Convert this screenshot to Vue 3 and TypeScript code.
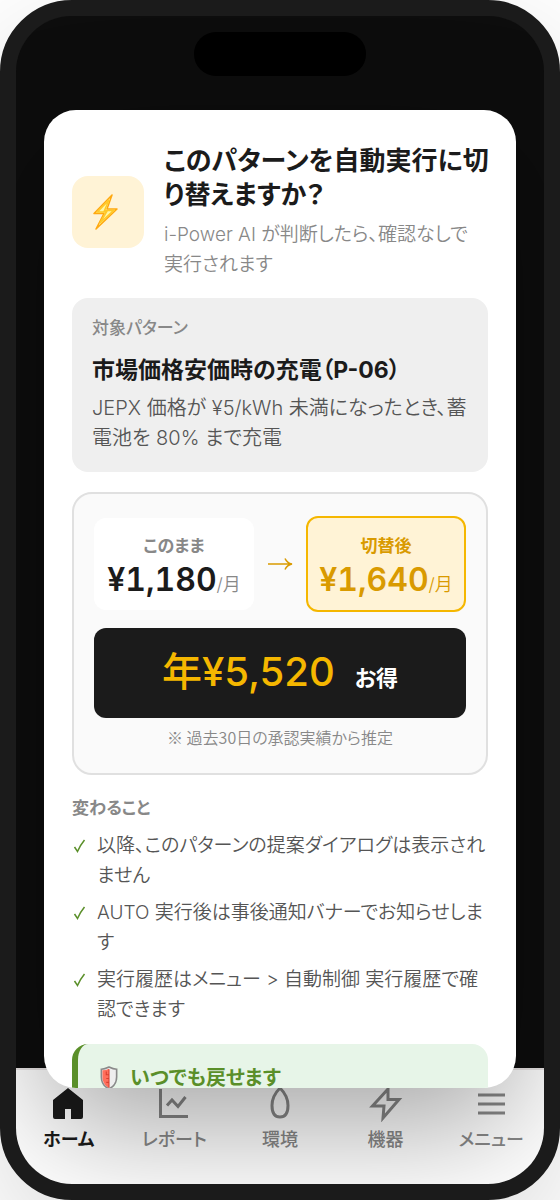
<script setup lang="ts">
interface Tab {
  id: string
  label: string
}

const tabs: Tab[] = [
  { id: 'home', label: 'ホーム' },
  { id: 'report', label: 'レポート' },
  { id: 'env', label: '環境' },
  { id: 'device', label: '機器' },
  { id: 'menu', label: 'メニュー' },
]

const changes: string[] = [
  '以降、このパターンの提案ダイアログは表示されません',
  'AUTO 実行後は事後通知バナーでお知らせします',
  '実行履歴はメニュー > 自動制御 実行履歴で確認できます',
]
</script>

<template>
  <div class="phone">
    <div class="screen">
      <div class="island"></div>

      <nav class="tabbar">
        <button v-for="tab in tabs" :key="tab.id" type="button" class="tab" :class="{ active: tab.id === 'home' }">
          <svg v-if="tab.id === 'home'" viewBox="0 0 36 36" class="tab-icon">
            <path d="M17 2 2 14v17a2 2 0 0 0 2 2h10V23h6v10h10a2 2 0 0 0 2-2V14Z" fill="currentColor" />
          </svg>
          <svg v-else-if="tab.id === 'report'" viewBox="0 0 36 36" class="tab-icon line">
            <path d="M4.500 3v27.500H32M11 19.500l5-5.500 6 6.500 7.500-9.500" />
          </svg>
          <svg v-else-if="tab.id === 'env'" viewBox="0 0 36 36" class="tab-icon line">
            <path d="M18 2C13 7 10 13 10 19.500 10 27 13 31 18 31s8-4 8-11.500C26 13 23 7 18 2Z" />
          </svg>
          <svg v-else-if="tab.id === 'device'" viewBox="0 0 36 36" class="tab-icon line">
            <path d="M20 3 4.500 20H16l-1 12L31 13.500H20Z" />
          </svg>
          <svg v-else viewBox="0 0 36 36" class="tab-icon line">
            <path d="M5 9h27M5 18h27M5 27h27" />
          </svg>
          <span>{{ tab.label }}</span>
        </button>
      </nav>

      <section class="dialog" role="dialog" aria-labelledby="dialog-title">
        <header class="head">
          <div class="badge">
            <svg viewBox="0 0 36 36" class="bolt">
              <path d="M22 1 4 19.500h10L6 35 27 15H17Z" fill="#fff6a8" stroke="#ffa810" stroke-width="1.500" stroke-linejoin="round" />
              <path d="M19 6 7.500 18h9L10 29 23.500 16.500h-9Z" fill="none" stroke="#ffc928" stroke-width="1.500" />
            </svg>
          </div>
          <div class="head-text">
            <h1 id="dialog-title">このパターンを自動実行に切り替えますか？</h1>
            <p>i-Power AI が判断したら、確認なしで実行されます</p>
          </div>
        </header>

        <div class="target">
          <div class="label">対象パターン</div>
          <h2>市場価格安価時の充電（P-06）</h2>
          <p>JEPX 価格が ¥5/kWh 未満になったとき、蓄電池を 80% まで充電</p>
        </div>

        <div class="compare">
          <div class="plans">
            <div class="plan">
              <div class="plan-label">このまま</div>
              <div class="price">¥1,180<small>/月</small></div>
            </div>
            <svg viewBox="0 0 28 16" class="arrow">
              <path d="M2 8h24M19 2.500Q21 7 26 8 21 9 19 13.500" />
            </svg>
            <div class="plan after">
              <div class="plan-label">切替後</div>
              <div class="price">¥1,640<small>/月</small></div>
            </div>
          </div>
          <div class="saving"><strong>年¥5,520</strong><span>お得</span></div>
          <p class="note">※ 過去30日の承認実績から推定</p>
        </div>

        <h3>変わること</h3>
        <ul>
          <li v-for="item in changes" :key="item">
            <svg viewBox="0 0 16 16" class="check"><path d="M2.500 9 5.500 13.500Q8 7.500 12.500 2" /></svg>
            <span>{{ item }}</span>
          </li>
        </ul>

        <div class="revert">
          <svg viewBox="0 0 16 22" class="shield">
            <path d="M8 1C6 2 3 3 1 3v7c0 5 3 9 7 11 4-2 7-6 7-11V3c-2 0-5-1-7-2Z" fill="#eeeeee" stroke="#8a8a8a" stroke-width="1.500" />
            <path d="M8 2.500C6 3.500 4 4 2 4v6c0 4 2 8 6 10Z" fill="#ff6f5c" />
            <path d="M8 3v17M5.500 5v3H8M5.500 11.500H8M5.500 15H8" fill="none" stroke="#d8402f" />
          </svg>
          <span>いつでも戻せます</span>
        </div>
      </section>
    </div>
  </div>
</template>

<style>
body {
  margin: 0;
  background: #fff;
}
</style>

<style scoped>
* {
  box-sizing: border-box;
}

h1, h2, h3, p, ul {
  margin: 0;
  padding: 0;
}

.phone {
  height: 100vh;
  border: 16px solid #1b1b1b;
  border-radius: 72px;
  background: #1b1b1b;
  box-shadow: 0 40px 120px rgba(0, 0, 0, 0.15);
  font-family: Inter, "Noto Sans CJK JP", sans-serif;
  font-feature-settings: "palt";
  color: #1b1b1b;
}

.screen {
  position: relative;
  display: grid;
  grid-template-columns: minmax(0, 1fr);
  grid-template-rows: minmax(0, 1fr);
  height: 100%;
  border-radius: 56px;
  overflow: hidden;
  background: #0d0d0d;
}

.island {
  position: absolute;
  top: 16px;
  left: 50%;
  width: 172px;
  height: 44px;
  margin-left: -86px;
  border-radius: 22px;
  background: #000;
}

.tabbar {
  grid-area: 1 / 1;
  align-self: end;
  display: grid;
  grid-template-columns: repeat(5, 1fr);
  height: 116px;
  padding: 16px 0 32px;
  border-top: 2px solid #e8e4e4;
  background: #fff;
}

.tab {
  display: flex;
  flex-direction: column;
  align-items: center;
  gap: 4px;
  padding: 0;
  border: 0;
  background: none;
  color: #888;
  font: inherit;
  font-size: 18px;
  font-weight: 500;
  line-height: 28px;
  white-space: nowrap;
}

.tab.active {
  color: #1b1b1b;
  font-weight: 700;
}

.tab-icon {
  width: 36px;
  height: 36px;
}

.line {
  fill: none;
  stroke: currentColor;
  stroke-width: 3;
}

.dialog {
  grid-area: 1 / 1;
  position: relative;
  margin: 94px 28px 96px;
  padding: 34px 28px 0;
  border-radius: 32px;
  background: #fff;
  box-shadow: 0 40px 120px rgba(0, 0, 0, 0.35);
  overflow: hidden;
}

.head {
  display: flex;
  align-items: center;
  gap: 20px;
  margin: 0 -4px 18px 0;
}

.badge {
  display: flex;
  align-items: center;
  justify-content: center;
  flex: none;
  width: 72px;
  height: 72px;
  border-radius: 16px;
  background: #fff3d6;
}

.bolt {
  width: 36px;
  height: 36px;
}

.head-text {
  flex: 1;
}

h1 {
  font-size: 26px;
  font-weight: 700;
  line-height: 34px;
}

.head-text p {
  margin-top: 8px;
  padding-right: 12px;
  color: #888;
  font-size: 19px;
  font-weight: 350;
  line-height: 30px;
}

.target {
  padding: 16px 20px 19px;
  border-radius: 16px;
  background: #efefef;
}

.label {
  color: #888;
  font-size: 17px;
  font-weight: 500;
  line-height: 28px;
}

h2 {
  margin-top: 10px;
  font-size: 23px;
  font-weight: 700;
  line-height: 36px;
}

.target p {
  margin-top: 5px;
  color: #555;
  font-size: 20px;
  font-weight: 350;
  line-height: 30px;
}

.compare {
  margin-top: 20px;
  padding: 22px 20px;
  border: 2px solid #e0e0e0;
  border-radius: 20px;
  background: #fafafa;
}

.plans {
  display: grid;
  grid-template-columns: minmax(0, 1fr) auto minmax(0, 1fr);
  align-items: center;
  gap: 12px;
}

.plan {
  padding: 14px 0 10px;
  border-radius: 12px;
  background: #fff;
  text-align: center;
}

.plan-label {
  color: #888;
  font-size: 17px;
  font-weight: 700;
  line-height: 28px;
}

.price {
  height: 40px;
  font-size: 32px;
  font-weight: 600;
  font-variant-numeric: tabular-nums;
  line-height: 40px;
  white-space: nowrap;
}

.price small {
  color: #888;
  font-size: 18px;
  font-weight: 350;
  line-height: 20px;
}

.after {
  border: 2px solid #f5b700;
  background: #fff3d6;
}

.after .plan-label,
.after .price,
.after small {
  color: #d99a00;
}

.arrow {
  width: 28px;
  height: 16px;
  fill: none;
  stroke: #d99a00;
  stroke-width: 1.5;
}

.saving {
  display: flex;
  align-items: baseline;
  justify-content: center;
  gap: 20px;
  height: 90px;
  margin-top: 16px;
  padding-top: 16px;
  border-radius: 12px;
  background: #1b1b1b;
  color: #fff;
  font-size: 22px;
  font-weight: 700;
  line-height: 56px;
}

.saving strong {
  color: #f5b700;
  font-size: 40px;
  font-weight: 500;
}

.note {
  margin-top: 5px;
  color: #888;
  font-family: "Noto Sans CJK JP", sans-serif;
  font-size: 16px;
  font-weight: 350;
  line-height: 28px;
  text-align: center;
}

h3 {
  margin-top: 19px;
  color: #888;
  font-size: 17px;
  font-weight: 700;
  line-height: 28px;
}

ul {
  display: grid;
  gap: 7px;
  margin-top: 9px;
  list-style: none;
}

li {
  display: flex;
  gap: 9px;
  color: #555;
  font-size: 19px;
  font-weight: 350;
  line-height: 30px;
}

.check {
  flex: none;
  width: 16px;
  height: 16px;
  margin-top: 7px;
  fill: none;
  stroke: #5a8f29;
  stroke-width: 1.5;
}

.revert {
  display: flex;
  align-items: center;
  gap: 12px;
  margin-top: 19px;
  padding: 20px 22px 32px;
  border-left: 6px solid #5a8f29;
  border-radius: 16px;
  background: #e7f5e8;
  color: #5a8f29;
  font-size: 20px;
  font-weight: 700;
  line-height: 28px;
}

.shield {
  flex: none;
  width: 18px;
  height: 24px;
}
</style>
